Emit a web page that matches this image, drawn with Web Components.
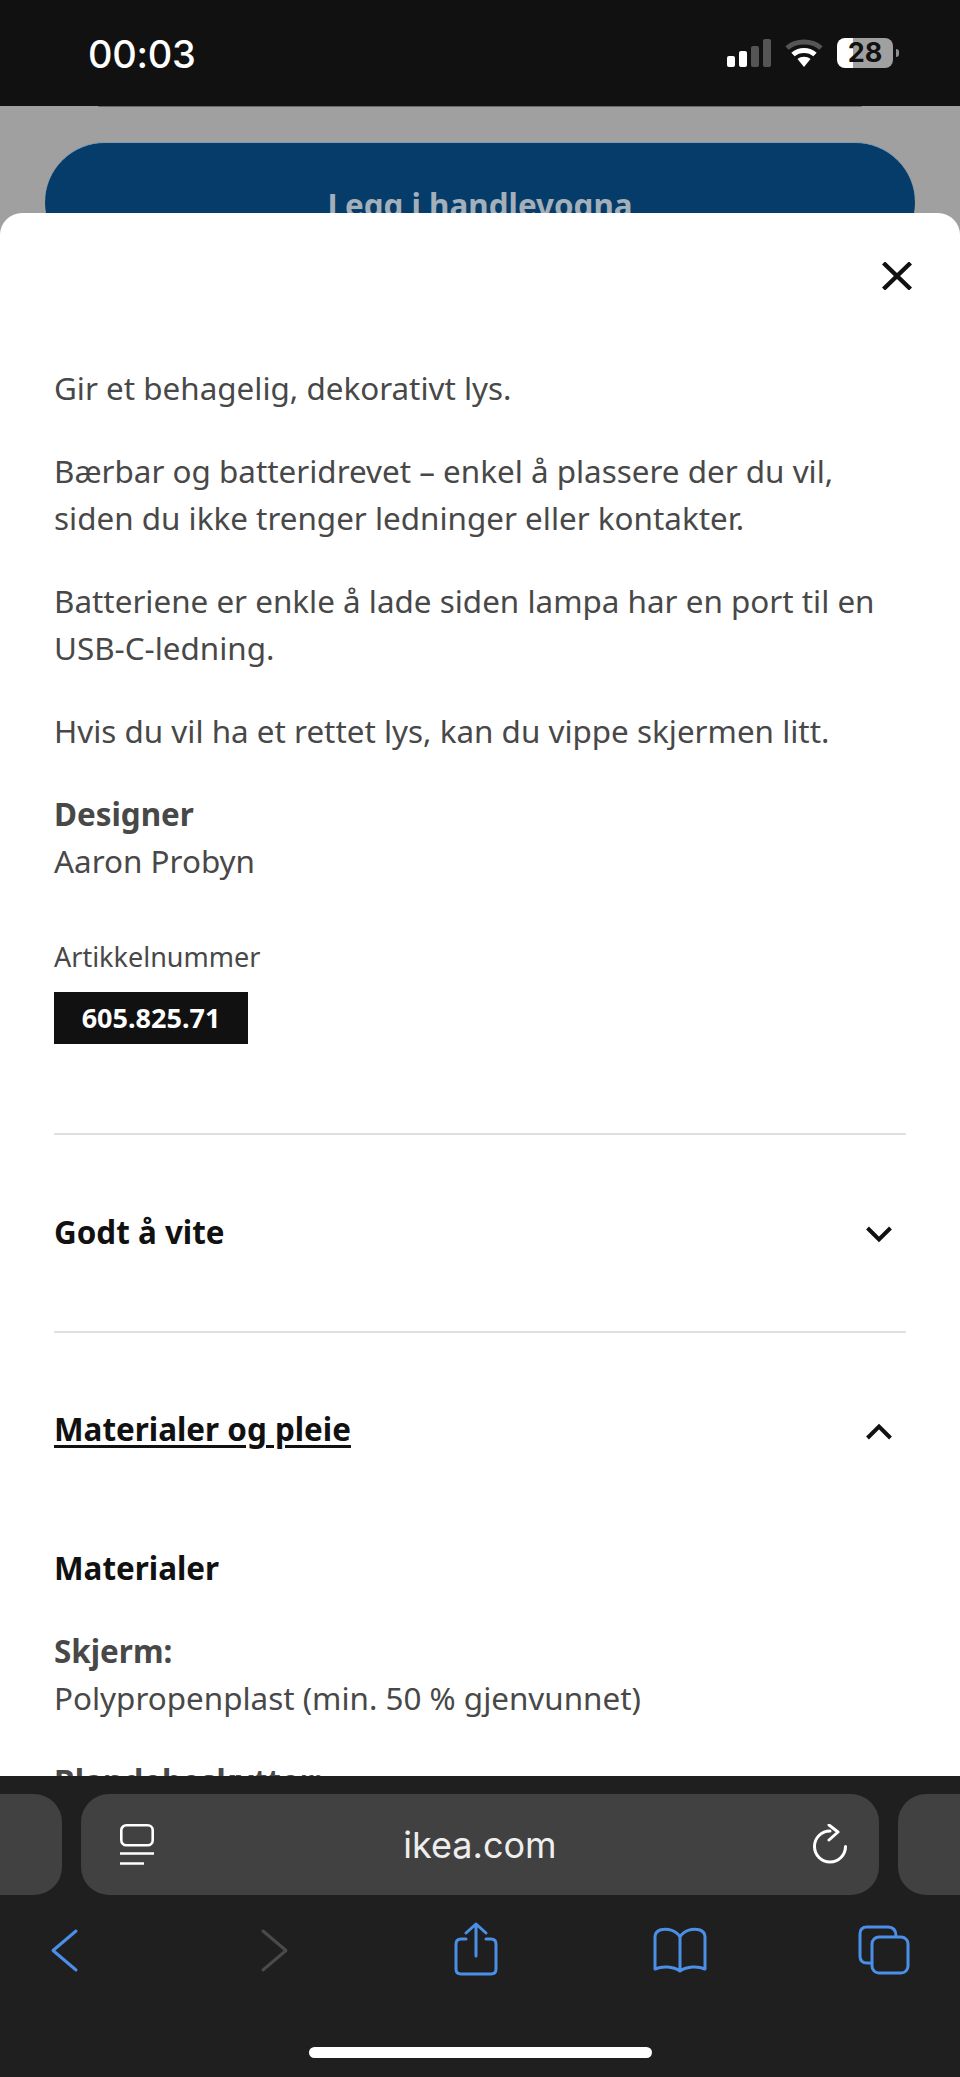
<!DOCTYPE html>
<html lang="nb">
<head>
<meta charset="utf-8">
<title>ikea.com</title>
<style>
html, body { margin: 0; padding: 0; }
body { width: 960px; height: 2077px; overflow: hidden; background: #a0a0a0; font-family: "Noto Sans", sans-serif; }
</style>
</head>
<body>
<phone-screen>
    <status-bar time="00:03" battery="28"></status-bar>
    <cart-backdrop label="Legg i handlevogna"></cart-backdrop>
    <info-sheet>
        <sheet-text>Gir et behagelig, dekorativt lys.</sheet-text>
        <sheet-text>Bærbar og batteridrevet – enkel å plassere der du vil, siden du ikke trenger ledninger eller kontakter.</sheet-text>
        <sheet-text>Batteriene er enkle å lade siden lampa har en port til en USB-C-ledning.</sheet-text>
        <sheet-text>Hvis du vil ha et rettet lys, kan du vippe skjermen litt.</sheet-text>
        <sheet-text heading="Designer">Aaron Probyn</sheet-text>
        <article-number number="605.825.71"></article-number>
        <accordion-row name="Godt å vite"></accordion-row>
        <accordion-row name="Materialer og pleie" open>
            <h3 slot="body" style="margin:0 0 36px;font:700 31.4px/47px 'Noto Sans',sans-serif;color:#111">Materialer</h3>
            <sheet-text slot="body" heading="Skjerm:">Polypropenplast (min. 50 % gjenvunnet)</sheet-text>
            <sheet-text slot="body" heading="Blandebeskytter:"></sheet-text>
        </accordion-row>
    </info-sheet>
    <browser-bar url="ikea.com"></browser-bar>
</phone-screen>

<script>
const makeTemplate = (html) => {
    const el = document.createElement('template');
    el.innerHTML = html;
    return el;
};

class Base extends HTMLElement {
    constructor(tpl) {
        super();
        this.attachShadow({ mode: 'open' });
        this.shadowRoot.appendChild(tpl.content.cloneNode(true));
    }
    $(sel) {
        return this.shadowRoot.querySelector(sel);
    }
}

const phoneTpl = makeTemplate(`
<style>
:host { display: flex; flex-direction: column; width: 960px; height: 2077px; overflow: hidden; }
</style>
<slot></slot>
`);
class PhoneScreen extends Base {
    constructor() { super(phoneTpl); }
}
customElements.define('phone-screen', PhoneScreen);

const statusTpl = makeTemplate(`
<style>
:host { display: flex; align-items: center; flex: none; height: 106px; background: #111; color: #fff; box-sizing: border-box; padding: 0 61px 0 88px; justify-content: space-between; }
.time { font: 500 38px/44px Inter, sans-serif; margin-top: 1px; letter-spacing: -.3px; }
.icons { display: flex; align-items: center; }
svg { display: block; }
.battery { width: 56px; height: 30px; border-radius: 8px; margin-left: 14px; background: linear-gradient(90deg, #fff 16px, #a0a0a0 16px); color: #111; font: 700 27px/30px Inter, sans-serif; text-align: center; }
.nub { width: 3px; height: 8px; margin-left: 3px; background: #8e8e8e; border-radius: 0 3px 3px 0; }
</style>
<span class="time"></span>
<div class="icons">
    <svg width="44" height="30" viewBox="0 0 44 30">
        <rect x="0" y="18" width="8" height="11" rx="2" fill="#fff"/>
        <rect x="12" y="13" width="8" height="16" rx="2" fill="#fff"/>
        <rect x="24" y="8" width="8" height="21" rx="2" fill="#555"/>
        <rect x="36" y="1" width="8" height="28" rx="2" fill="#555"/>
    </svg>
    <svg width="38" height="30" viewBox="0 0 38 30" style="margin-left:14px">
        <path d="M2 10 C11 2 27 2 36 10" fill="none" stroke="#555" stroke-width="5"/>
        <path d="M8 16.5 C14 11 24 11 30 16.5" fill="none" stroke="#fff" stroke-width="5"/>
        <path d="M12.5 21 C16 18 22 18 25.5 21 L19 29 Z" fill="#fff"/>
    </svg>
    <div class="battery"></div>
    <div class="nub"></div>
</div>
`);
class StatusBar extends Base {
    constructor() { super(statusTpl); }
    connectedCallback() {
        this.$('.time').textContent = this.getAttribute('time');
        this.$('.battery').textContent = this.getAttribute('battery');
    }
}
customElements.define('status-bar', StatusBar);

const backdropTpl = makeTemplate(`
<style>
:host { display: block; flex: none; height: 107px; overflow: hidden; background: #a0a0a0; }
.edge { height: 1px; margin: 0 98px 0 98px; background: #6a6a6a; border-radius: 0 0 6px 6px; }
button { display: flex; justify-content: center; align-items: flex-start; width: 870px; height: 120px; margin: 35px 0 0 45px; border: none; border-top: 1px solid #7f9cb4; border-radius: 60px; background: #053c69; color: #a3afb9; font: 700 31.4px/41px "Noto Sans", sans-serif; padding: 41px 0 0; box-sizing: border-box; }
</style>
<div class="edge"></div>
<button type="button"></button>
`);
class CartBackdrop extends Base {
    constructor() { super(backdropTpl); }
    connectedCallback() {
        this.$('button').textContent = this.getAttribute('label');
    }
}
customElements.define('cart-backdrop', CartBackdrop);

const sheetTpl = makeTemplate(`
<style>
:host { display: block; flex: 1; min-height: 0; overflow: hidden; background: #fff; border-radius: 22px 22px 0 0; }
.top { display: flex; justify-content: flex-end; height: 151px; box-sizing: border-box; padding: 49px 48px 0 0; }
.content { padding: 0 54px; }
svg { display: block; }
</style>
<div class="top">
    <svg width="30" height="28" viewBox="0 0 30 28" aria-label="Lukk"><path d="M1.5 1 L28.5 27 M28.5 1 L1.5 27" stroke="#111" stroke-width="4.4" fill="none"/></svg>
</div>
<div class="content"><slot></slot></div>
`);
class InfoSheet extends Base {
    constructor() { super(sheetTpl); }
}
customElements.define('info-sheet', InfoSheet);

const textTpl = makeTemplate(`
<style>
:host { display: block; margin-bottom: 36px; font: 400 31.4px/47px "Noto Sans", sans-serif; color: #484848; }
b { display: block; font-weight: 700; }
b:empty { display: none; }
</style>
<b></b><slot></slot>
`);
class SheetText extends Base {
    constructor() { super(textTpl); }
    connectedCallback() {
        this.$('b').textContent = this.getAttribute('heading') || '';
    }
}
customElements.define('sheet-text', SheetText);

const articleTpl = makeTemplate(`
<style>
:host { display: block; margin-top: 55px; padding-bottom: 90px; border-bottom: 2px solid #dfdfdf; }
.label { font: 400 27px/36px "Noto Sans", sans-serif; color: #484848; margin-bottom: 17px; }
.badge { display: block; width: 194px; height: 52px; background: #111; color: #fff; font: 700 27px/52px "Noto Sans", sans-serif; text-align: center; margin-bottom: -1px; }
</style>
<div class="label">Artikkelnummer</div>
<div class="badge"></div>
`);
class ArticleNumber extends Base {
    constructor() { super(articleTpl); }
    connectedCallback() {
        this.$('.badge').textContent = this.getAttribute('number');
    }
}
customElements.define('article-number', ArticleNumber);

const accordionTpl = makeTemplate(`
<style>
:host { display: block; }
.head { display: flex; align-items: center; justify-content: space-between; height: 196px; padding-right: 14px; box-sizing: border-box; font: 700 31.4px/47px "Noto Sans", sans-serif; color: #111; }
:host(:not([open])) { border-bottom: 2px solid #dfdfdf; }
:host([open]) .name { text-decoration: underline; text-underline-offset: 4px; text-decoration-thickness: 3px; margin-top: -5px; }
:host([open]) svg { transform: rotate(180deg); margin-top: 0; }
.name { margin-top: -3px; }
svg { display: block; margin-top: 3px; }
.body { display: none; margin-top: 15px; }
:host([open]) .body { display: block; }
</style>
<div class="head">
    <span class="name"></span>
    <svg width="26" height="17" viewBox="0 0 26 17"><path d="M1.5 2 L13 13.5 L24.5 2" fill="none" stroke="#111" stroke-width="4"/></svg>
</div>
<div class="body"><slot name="body"></slot></div>
`);
class AccordionRow extends Base {
    constructor() { super(accordionTpl); }
    connectedCallback() {
        this.$('.name').textContent = this.getAttribute('name');
    }
}
customElements.define('accordion-row', AccordionRow);

const browserTpl = makeTemplate(`
<style>
:host { display: block; flex: none; height: 301px; background: #1f1f1f; overflow: hidden; }
.tabs { display: flex; gap: 19px; height: 101px; margin: 18px 0 0 -140px; width: 1240px; }
.pill { flex: none; background: #414141; border-radius: 28px; }
.side { width: 202px; }
.url { width: 798px; display: flex; align-items: center; justify-content: space-between; padding: 0 32px 0 39px; box-sizing: border-box; color: #eee; font: 400 36px/44px Inter, sans-serif; }
.url span { margin-left: -7px; }
.tools { display: flex; margin: 24px 0 0 33px; }
.tools svg { display: block; flex: none; fill: none; stroke-width: 3; stroke-linecap: round; stroke-linejoin: round; }
.home { width: 343px; height: 11px; margin: 64px 0 0 309px; background: #fff; border-radius: 6px; }
</style>
<div class="tabs">
    <div class="pill side"></div>
    <div class="pill url">
        <svg width="34" height="42" viewBox="0 0 34 42" fill="none" stroke="#fff" stroke-width="2.6">
            <rect x="1.3" y="1.3" width="31.4" height="20" rx="5"/>
            <path d="M0 29.5 H34 M0 39.5 H24"/>
        </svg>
        <span class="host"></span>
        <svg width="34" height="42" viewBox="0 0 34 42" fill="none" stroke="#fff" stroke-width="3" stroke-linecap="round" stroke-linejoin="round">
            <path d="M17 7 A15.5 15.5 0 1 0 32.5 22.5"/>
            <path d="M16 1 L25 8 L16 16"/>
        </svg>
    </div>
    <div class="pill side"></div>
</div>
<div class="tools">
    <svg width="64" height="64" viewBox="33 1920 64 64" stroke="#4a8fe8"><path d="M76 1932 L53 1951.5 L76 1971"/></svg>
    <svg width="64" height="64" viewBox="243 1920 64 64" stroke="#4a4a4a" style="margin-left:146px"><path d="M263 1932 L286 1951.5 L263 1971"/></svg>
    <svg width="64" height="64" viewBox="444 1920 64 64" stroke="#4a8fe8" style="margin-left:137px"><path d="M466 1940 H461 Q456 1940 456 1945 V1970 Q456 1975 461 1975 H491 Q496 1975 496 1970 V1945 Q496 1940 491 1940 H486 M476 1957 V1925 M466 1934 L476 1925 L486 1934"/></svg>
    <svg width="64" height="64" viewBox="648 1920 64 64" stroke="#4a8fe8" style="margin-left:140px"><path d="M680 1938 C676 1931 667 1929 660 1931 Q655 1933 655 1938 V1970 C662 1967 673 1967 680 1972 C687 1967 698 1967 705 1970 V1938 Q705 1933 700 1931 C693 1929 684 1931 680 1938 Z M680 1938 V1971"/></svg>
    <svg width="64" height="64" viewBox="852 1920 64 64" stroke="#4a8fe8" style="margin-left:140px"><path d="M871 1964 H867 Q860 1964 860 1957 V1935 Q860 1928 867 1928 H888 Q896 1928 896 1937"/><rect x="872" y="1938" width="36" height="36" rx="7"/></svg>
</div>
<div class="home"></div>
`);
class BrowserBar extends Base {
    constructor() { super(browserTpl); }
    connectedCallback() {
        this.$('.host').textContent = this.getAttribute('url');
    }
}
customElements.define('browser-bar', BrowserBar);
</script>
</body>
</html>
